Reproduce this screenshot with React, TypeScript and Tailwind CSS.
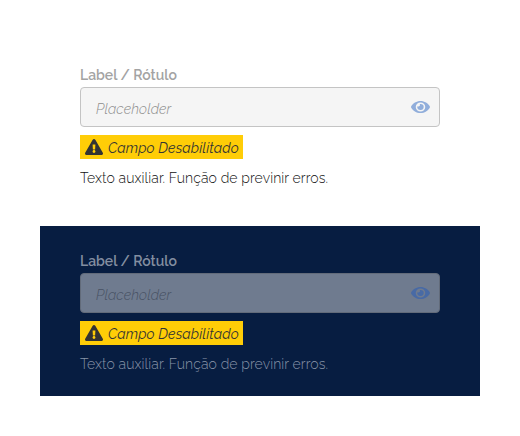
import { FaExclamationTriangle, FaEye } from 'react-icons/fa';

function DisabledField({ dark = false }: { dark?: boolean }) {
  return (
    <div className="flex flex-col items-start">
      <label
        className={`h-[19px] whitespace-nowrap text-[14px] font-semibold leading-[19px] ${
          dark ? 'text-[#838ea0]' : 'text-[#a3a3a3]'
        }`}
      >
        Label / Rótulo
      </label>
      <div
        className={`mt-[2px] flex h-10 w-full items-center justify-between rounded border pl-[15px] pr-[9px] ${
          dark ? 'border-[#626b7a] bg-[#6f7b8f]' : 'border-[#c4c4c4] bg-[#f5f5f5]'
        }`}
      >
        <span
          className={`mt-1 whitespace-nowrap text-[14px] font-light italic leading-5 tracking-[0.09px] ${
            dark ? 'text-[#475163]' : 'text-[#8c8c8c]'
          }`}
        >
          Placeholder
        </span>
        <FaEye
          preserveAspectRatio="none"
          className={`h-4 w-[19px] ${dark ? 'text-[#486aa5]' : 'text-[#91aedb]'}`}
        />
      </div>
      <div className="mt-2 flex h-6 w-[163px] items-center bg-[#ffcd07] pl-[5px] text-[#333333]">
        <FaExclamationTriangle className="h-4 w-[18px] shrink-0" />
        <span className="ml-[5px] mt-[2px] whitespace-nowrap text-[14px] italic leading-5 tracking-[0.11px]">
          Campo Desabilitado
        </span>
      </div>
      <p
        className={`mt-[9px] whitespace-nowrap text-[14px] font-light leading-5 tracking-[0.1px] ${
          dark ? 'text-[#8894a8]' : 'text-[#111111]'
        }`}
      >
        Texto auxiliar. Função de previnir erros.
      </p>
    </div>
  );
}

export default function App() {
  return (
    <main className="h-[436px] w-[520px] bg-white px-10 pt-10 font-['Raleway','Lato',sans-serif]">
      <section className="h-[186px] px-10 pt-[26px]">
        <DisabledField />
      </section>
      <section className="h-[170px] bg-[#071d41] px-10 pt-[26px]">
        <DisabledField dark />
      </section>
    </main>
  );
}
